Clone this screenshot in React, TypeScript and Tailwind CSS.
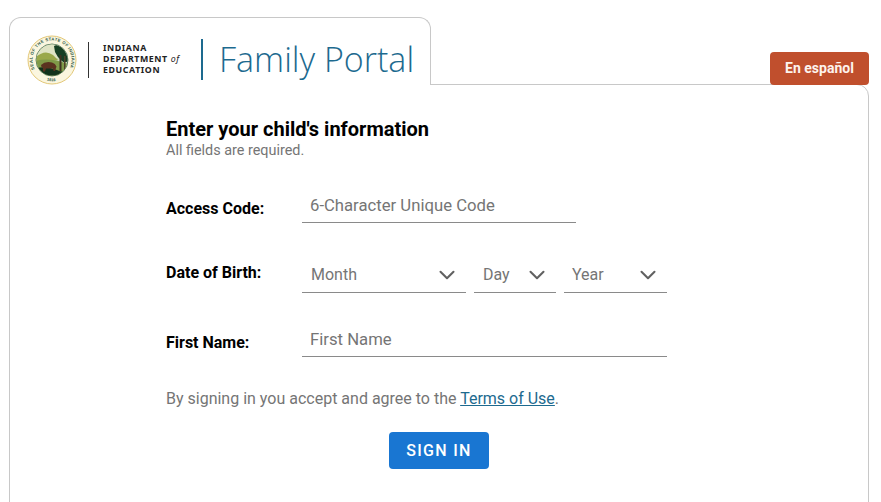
import { ChevronDown } from 'lucide-react'

function Seal() {
  return (
    <svg width="50" height="50" viewBox="0 0 100 100" className="shrink-0">
      <defs>
        <path id="sealTop" d="M 16.2 69.5 A 39 39 0 1 1 83.8 69.5" />
        <path id="sealBottom" d="M 14 72 A 42 42 0 0 0 86 72" />
        <clipPath id="sealInner">
          <circle cx="50" cy="50" r="31" />
        </clipPath>
      </defs>
      <circle cx="50" cy="50" r="48" fill="#fbf6df" stroke="#e3c878" strokeWidth="2" />
      <circle cx="50" cy="50" r="32" fill="#c9d6b4" stroke="#2f5a3c" strokeWidth="1.5" />
      <text fontSize="8.5" fill="#2f5a4a" fontFamily="Liberation Sans, sans-serif" fontWeight="700">
        <textPath href="#sealTop" startOffset="1%" textLength="156">SEAL OF THE STATE OF INDIANA</textPath>
      </text>
      <text fontSize="8" fill="#2f5a4a" fontFamily="Liberation Sans, sans-serif" fontWeight="700">
        <textPath href="#sealBottom" startOffset="38%">1816</textPath>
      </text>
      <g clipPath="url(#sealInner)">
        <rect x="18" y="18" width="64" height="28" fill="#dfe3c4" />
        <path d="M18 44 Q36 28 52 40 L62 50 L18 56 Z" fill="#9aa84a" />
        <path d="M18 52 Q44 44 82 58 L82 84 L18 84 Z" fill="#7f9a48" />
        <path d="M18 66 Q40 62 60 70 Q72 76 82 70 L82 84 L18 84 Z" fill="#12331c" />
        <path d="M54 22 Q68 14 80 24 L84 50 Q76 58 70 52 Q60 44 56 34 Z" fill="#173f24" />
        <rect x="65" y="40" width="4" height="32" fill="#3f3220" />
        <rect x="74" y="42" width="3" height="30" fill="#4f4028" />
        <path d="M28 60 Q36 52 50 55 Q57 57 59 63 L56 72 L53 72 L52 67 L38 67 L36 73 L32 73 L32 66 Q28 65 28 60 Z" fill="#5a3320" />
      </g>
    </svg>
  )
}

function DateSelect({ label, className }: { label: string; className: string }) {
  return (
    <div className={`flex h-[36px] items-center justify-between border-b border-[#8a8a8a] pr-[6px] ${className}`}>
      <span className="text-[16px] text-[#757575]">{label}</span>
      <ChevronDown size={26} strokeWidth={1.9} className="text-[#616161]" />
    </div>
  )
}

export default function App() {
  return (
    <div className="h-[502px] overflow-hidden bg-white pl-[9px] pr-[12px] pt-[17px] font-['Roboto',sans-serif]">
      {/* Header tab */}
      <div className="flex items-end">
        <div className="relative z-10 -mb-px flex h-[68px] w-[422px] items-center rounded-t-xl border border-b-0 border-[#c8c8c8] bg-white pl-[17px] pt-[16px]">
          <Seal />
          <div className="ml-[11px] h-[36px] w-px bg-[#333]" />
          <div className="ml-[14px] w-[98px] font-['Noto_Sans',sans-serif] text-[8.8px] font-bold leading-[11px] tracking-[0.6px] text-[#222]">
            <div>INDIANA</div>
            <div>
              DEPARTMENT <span className="font-normal italic">of</span>
            </div>
            <div>EDUCATION</div>
          </div>
          <div className="h-[41px] w-[2px] bg-[#1d6a8f]" />
          <div className="ml-[16px] font-['Open_Sans',sans-serif] text-[34px] font-light text-[#1d6a8f]">
            Family Portal
          </div>
        </div>
        <div className="flex flex-1 justify-end">
          <a className="relative z-10 -mb-px flex h-[33px] w-[99px] items-center justify-center rounded-[4px] bg-[#c04f2d] text-[14px] font-bold text-[#fdf3ee]">
            En español
          </a>
        </div>
      </div>

      {/* Card */}
      <div className="h-[500px] rounded-tr-xl border border-[#c8c8c8] pl-[156px] pt-[33px]">
        <h1 className="text-[20px] font-bold leading-[22px] text-black">Enter your child's information</h1>
        <p className="relative top-[1px] text-[14.4px] leading-[20px] text-[#757575]">All fields are required.</p>

        <div className="mt-[27px] flex items-end">
          <label className="relative top-[-2px] w-[136px] text-[16px] font-bold text-black">Access Code:</label>
          <input
            placeholder="6-Character Unique Code"
            className="h-[36px] w-[274px] border-b border-[#8a8a8a] px-[8px] pt-[1px] text-[16.7px] outline-none placeholder:text-[#757575]"
          />
        </div>

        <div className="mt-[34px] flex items-end">
          <label className="relative top-[-8px] w-[136px] text-[16px] font-bold text-black">Date of Birth:</label>
          <div className="flex gap-[8px]">
            <DateSelect label="Month" className="w-[164px] pl-[9px]" />
            <DateSelect label="Day" className="w-[82px] pl-[9px]" />
            <DateSelect label="Year" className="w-[103px] pl-[8px]" />
          </div>
        </div>

        <div className="mt-[28px] flex items-end">
          <label className="relative top-[-2px] w-[136px] text-[16px] font-bold text-black">First Name:</label>
          <input
            placeholder="First Name"
            className="h-[36px] w-[365px] border-b border-[#8a8a8a] px-[8px] pt-[1px] text-[16.7px] outline-none placeholder:text-[#757575]"
          />
        </div>

        <p className="mt-[30px] text-[16px] leading-[24px] text-[#757575]">
          By signing in you accept and agree to the{' '}
          <a className="text-[#1d6a8f] underline">Terms of Use</a>.
        </p>

        <button className="ml-[223px] mt-[21px] h-[37px] w-[100px] rounded-[4px] bg-[#1976d2] text-[16px] font-medium tracking-[1.3px] text-white">
          SIGN IN
        </button>
      </div>
    </div>
  )
}
